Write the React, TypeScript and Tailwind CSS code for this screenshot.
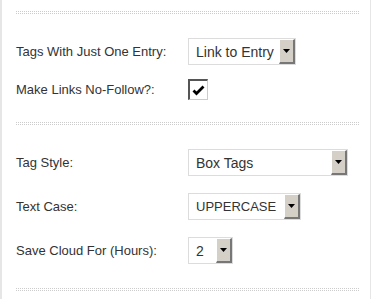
const Dotted = () => (
  <div className="h-[3px] border-y border-dotted border-[#cccccc]" />
);

interface FakeSelectProps {
  value: string;
  width: string;
  textSize?: string;
}

const FakeSelect = ({ value, width, textSize = "text-[14px]" }: FakeSelectProps) => (
  <div
    className={`flex h-[27px] items-stretch border border-[#dcdcdc] bg-white ${width}`}
  >
    <span
      className={`flex flex-1 items-center pl-[7px] leading-none text-[#333] ${textSize}`}
    >
      {value}
    </span>
    <span className="flex w-[16px] items-center justify-center border-t border-l border-t-white border-l-white border-r-2 border-b-2 border-r-[#777] border-b-[#777] bg-[#d4d0c8]">
      <svg width="7" height="4" viewBox="0 0 7 4">
        <path d="M0 0h7L3.5 4z" fill="#000" />
      </svg>
    </span>
  </div>
);

const Row = ({
  label,
  children,
  className = "",
}: {
  label: string;
  children: React.ReactNode;
  className?: string;
}) => (
  <div className={`flex items-center ${className}`}>
    <span className="w-[172px] text-[13px] text-[#333]">{label}</span>
    {children}
  </div>
);

export default function App() {
  return (
    <div
      className="h-[299px] w-[375px] bg-white"
      style={{ fontFamily: '"Liberation Sans", Arial, sans-serif' }}
    >
      <div className="h-full w-[371px] border-l-2 border-r border-[#e6e6e6] pl-[14px] pr-[11px] pt-[11px]">
        <Dotted />

        <Row label="Tags With Just One Entry:" className="mt-[24px]">
          <FakeSelect value="Link to Entry" width="w-[108px]" />
        </Row>

        <Row label="Make Links No-Follow?:" className="mt-[14px]">
          <div className="flex h-[21px] w-[20px] items-center justify-center border-t-2 border-l-2 border-t-[#555] border-l-[#555] border-r border-b border-r-[#ccc] border-b-[#ccc] bg-white">
            <svg width="13" height="11" viewBox="0 0 13 11">
              <path
                d="M1.5 5.5L4.5 8.5L11.5 1.5"
                fill="none"
                stroke="#000"
                strokeWidth="2.8"
              />
            </svg>
          </div>
        </Row>

        <div className="mt-[22px]">
          <Dotted />
        </div>

        <Row label="Tag Style:" className="mt-[24px]">
          <FakeSelect value="Box Tags" width="w-[160px]" />
        </Row>

        <Row label="Text Case:" className="mt-[17px]">
          <FakeSelect value="UPPERCASE" width="w-[113px]" textSize="text-[13px]" />
        </Row>

        <Row label="Save Cloud For (Hours):" className="mt-[17px]">
          <FakeSelect value="2" width="w-[45px]" />
        </Row>

        <div className="mt-[24px]">
          <Dotted />
        </div>
      </div>
    </div>
  );
}
